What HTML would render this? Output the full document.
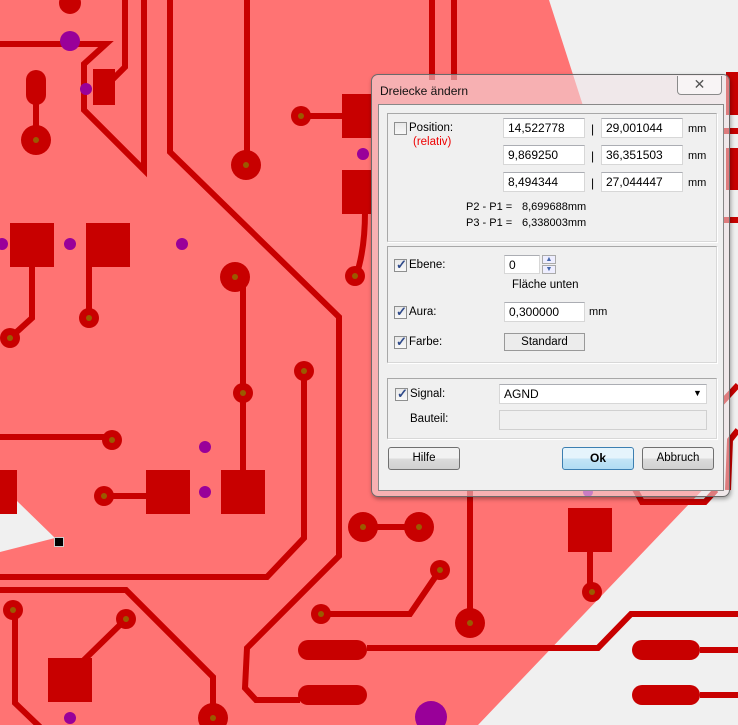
<!DOCTYPE html>
<html><head><meta charset="utf-8"><style>
*{box-sizing:border-box;margin:0;padding:0}
body{width:738px;height:725px;overflow:hidden;background:#f0f0f0;position:relative;font-family:"Liberation Sans",sans-serif;font-size:11px;color:#000}
svg{position:absolute;left:0;top:0}
.dlg{position:absolute;left:371px;top:74px;width:359px;height:423px;border:1px solid #6a6a6a;border-radius:7px;background:rgba(240,225,230,0.55);box-shadow:1px 2px 4px rgba(0,0,0,.35)}
.ttl{position:absolute;left:8px;top:9px;font-size:12px;color:#111}
.cls{position:absolute;left:305px;top:1px;width:45px;height:19px;border:1px solid #8a8a8a;border-top:none;border-radius:0 0 4px 4px;background:rgba(255,255,255,.5);text-align:center;font-size:14px;color:#555;line-height:17px}
.cl{position:absolute;left:6px;top:29px;width:346px;height:387px;background:#f0f0f0;border:1px solid #888}
.a{position:absolute}
.grp{position:absolute;border:1px solid #d8d8d8;border-top-color:#a8a8a8;border-left-color:#a8a8a8;box-shadow:1px 1px 0 #fff}
.cb{position:absolute;width:13px;height:13px;border:1px solid #8e8f8f;background:linear-gradient(#e8e8e8,#f8f8f8)}
.cb.k:after{content:"✓";position:absolute;left:1px;top:-3px;font-size:13px;color:#2f4a8a;font-weight:bold}
.inp{position:absolute;height:20px;background:#fff;border:1px solid #d7d7d7;border-top-color:#abadb3;padding:2px 4px;font-size:12px}
.btn{position:absolute;height:23px;border:1px solid #707070;border-radius:3px;background:linear-gradient(#f2f2f2 50%,#dcdcdc 50%,#d0d0d0);text-align:center;line-height:21px;font-size:11.5px}
</style></head><body>
<svg width="738" height="725" viewBox="0 0 738 725">
<polygon points="0,0 549,0 705,485 712,480 478,725 0,725" fill="#ff7373"/>
<polygon points="0,510 17,501 55,538 0,552" fill="#f0f0f0"/>
<g stroke="#c80000" stroke-width="6" fill="none" stroke-linejoin="miter">
<polyline points="0,44 106,44 84,64 84,110 144,170 144,0"/>
<polyline points="125,0 125,67 113,79"/>
<line x1="36" y1="104" x2="36" y2="140"/>
<polyline points="170,0 170,152 339,317 339,556 247,648 245,688 256,700 300,700"/>
<line x1="247" y1="0" x2="247" y2="165"/>
<line x1="301" y1="116" x2="345" y2="116"/>
<path d="M365,212 Q365,250 356,276"/>
<polyline points="32,267 32,318 10,338"/>
<line x1="89" y1="267" x2="89" y2="318"/>
<line x1="243" y1="277" x2="243" y2="492"/>
<polyline points="304,371 304,538 267,577 0,577"/>
<line x1="0" y1="437" x2="112" y2="437"/>
<line x1="104" y1="496" x2="150" y2="496"/>
<polyline points="0,590 126,590 213,677 213,718"/>
<polyline points="15,610 15,703 40,727"/>
<line x1="126" y1="619" x2="84" y2="660"/>
<line x1="363" y1="527" x2="419" y2="527"/>
<line x1="470" y1="480" x2="470" y2="623"/>
<polyline points="321,614 410,614 440,570"/>
<line x1="590" y1="540" x2="590" y2="592"/>
<polyline points="367,648 598,648 631,614 738,614"/>
<line x1="700" y1="650" x2="738" y2="650"/>
<line x1="700" y1="695" x2="738" y2="695"/>
<line x1="432" y1="0" x2="432" y2="80"/>
<line x1="454" y1="0" x2="454" y2="80"/>
<polyline points="630,480 642,502 705,502 716,490"/>
<line x1="720" y1="131" x2="738" y2="131"/>
<line x1="720" y1="220" x2="738" y2="220"/>
<polyline points="715,410 738,385"/>
<polyline points="728,490 730,440 738,430"/>
</g>
<g fill="#c80000">
<circle cx="70" cy="3" r="11"/>
<rect x="93" y="69" width="22" height="36"/>
<rect x="26" y="70" width="20" height="35" rx="10"/>
<rect x="342" y="94" width="30" height="44"/>
<rect x="342" y="170" width="30" height="44"/>
<rect x="10" y="223" width="44" height="44"/>
<rect x="86" y="223" width="44" height="44"/>
<rect x="146" y="470" width="44" height="44"/>
<rect x="221" y="470" width="44" height="44"/>
<rect x="0" y="470" width="17" height="44"/>
<rect x="48" y="658" width="44" height="44"/>
<rect x="568" y="508" width="44" height="44"/>
<rect x="298" y="640" width="69" height="20" rx="10"/>
<rect x="298" y="685" width="69" height="20" rx="10"/>
<rect x="632" y="640" width="68" height="20" rx="10"/>
<rect x="632" y="685" width="68" height="20" rx="10"/>
<rect x="726" y="72" width="12" height="43"/>
<rect x="726" y="148" width="12" height="42"/>
</g>
<g fill="#c80000">
<circle cx="36" cy="140" r="15"/><circle cx="246" cy="165" r="15"/><circle cx="235" cy="277" r="15"/><circle cx="363" cy="527" r="15"/><circle cx="419" cy="527" r="15"/><circle cx="470" cy="623" r="15"/><circle cx="213" cy="718" r="15"/>
<circle cx="301" cy="116" r="10"/><circle cx="355" cy="276" r="10"/><circle cx="10" cy="338" r="10"/><circle cx="89" cy="318" r="10"/><circle cx="243" cy="393" r="10"/><circle cx="304" cy="371" r="10"/><circle cx="112" cy="440" r="10"/><circle cx="104" cy="496" r="10"/><circle cx="13" cy="610" r="10"/><circle cx="126" cy="619" r="10"/><circle cx="321" cy="614" r="10"/><circle cx="440" cy="570" r="10"/><circle cx="592" cy="592" r="10"/>
</g>
<g fill="#9a5a00">
<circle cx="36" cy="140" r="3"/><circle cx="246" cy="165" r="3"/><circle cx="235" cy="277" r="3"/><circle cx="363" cy="527" r="3"/><circle cx="419" cy="527" r="3"/><circle cx="470" cy="623" r="3"/><circle cx="213" cy="718" r="3"/>
<circle cx="301" cy="116" r="3"/><circle cx="355" cy="276" r="3"/><circle cx="10" cy="338" r="3"/><circle cx="89" cy="318" r="3"/><circle cx="243" cy="393" r="3"/><circle cx="304" cy="371" r="3"/><circle cx="112" cy="440" r="3"/><circle cx="104" cy="496" r="3"/><circle cx="13" cy="610" r="3"/><circle cx="126" cy="619" r="3"/><circle cx="321" cy="614" r="3"/><circle cx="440" cy="570" r="3"/><circle cx="592" cy="592" r="3"/>
</g>
<g fill="#990099">
<circle cx="70" cy="41" r="10"/><circle cx="86" cy="89" r="6"/><circle cx="363" cy="154" r="6"/><circle cx="2" cy="244" r="6"/><circle cx="70" cy="244" r="6"/><circle cx="182" cy="244" r="6"/><circle cx="205" cy="447" r="6"/><circle cx="205" cy="492" r="6"/><circle cx="70" cy="718" r="6"/><circle cx="431" cy="717" r="16"/><circle cx="588" cy="492" r="5"/>
</g>
<rect x="54.5" y="537.5" width="9" height="9" fill="#000" stroke="#ccc"/>
</svg>
<div class="dlg">
<div class="ttl">Dreiecke ändern</div>
<div class="cls">✕</div>
<div class="cl">
<div class="grp" style="left:8px;top:8px;width:330px;height:129px"></div>
<div class="grp" style="left:8px;top:141px;width:330px;height:117px"></div>
<div class="grp" style="left:8px;top:273px;width:330px;height:61px"></div>
</div>
</div>
<div class="cb" style="left:394px;top:122px"></div>
<div class="a" style="left:409px;top:122px;font-size:11.5px">Position:</div>
<div class="a" style="left:413px;top:136px;font-size:11.5px;color:#e00">(relativ)</div>
<div class="inp" style="left:503px;top:118px;width:82px">14,522778</div>
<div class="inp" style="left:601px;top:118px;width:82px">29,001044</div>
<div class="inp" style="left:503px;top:145px;width:82px">9,869250</div>
<div class="inp" style="left:601px;top:145px;width:82px">36,351503</div>
<div class="inp" style="left:503px;top:172px;width:82px">8,494344</div>
<div class="inp" style="left:601px;top:172px;width:82px">27,044447</div>
<div class="a" style="left:591px;top:122px;font-size:12px">|</div>
<div class="a" style="left:591px;top:149px;font-size:12px">|</div>
<div class="a" style="left:591px;top:176px;font-size:12px">|</div>
<div class="a" style="left:688px;top:123px">mm</div>
<div class="a" style="left:688px;top:150px">mm</div>
<div class="a" style="left:688px;top:177px">mm</div>
<div class="a" style="left:466px;top:201px">P2 - P1 =</div>
<div class="a" style="left:522px;top:201px">8,699688mm</div>
<div class="a" style="left:466px;top:217px">P3 - P1 =</div>
<div class="a" style="left:522px;top:217px">6,338003mm</div>
<div class="cb k" style="left:394px;top:259px"></div>
<div class="a" style="left:409px;top:259px;font-size:11.5px">Ebene:</div>
<div class="inp" style="left:504px;top:255px;width:36px;height:19px">0</div>
<div class="a" style="left:542px;top:255px;width:14px;height:9px;border:1px solid #aaa;background:#eef;font-size:7px;text-align:center;line-height:8px;color:#46a">▲</div>
<div class="a" style="left:542px;top:265px;width:14px;height:9px;border:1px solid #aaa;background:#eef;font-size:7px;text-align:center;line-height:8px;color:#46a">▼</div>
<div class="a" style="left:512px;top:279px;font-size:11.5px">Fläche unten</div>
<div class="cb k" style="left:394px;top:306px"></div>
<div class="a" style="left:409px;top:306px;font-size:11.5px">Aura:</div>
<div class="inp" style="left:504px;top:302px;width:81px">0,300000</div>
<div class="a" style="left:589px;top:306px">mm</div>
<div class="cb k" style="left:394px;top:336px"></div>
<div class="a" style="left:409px;top:336px;font-size:11.5px">Farbe:</div>
<div class="a" style="left:504px;top:333px;width:81px;height:18px;border:1px solid #999;background:#ececec;text-align:center;line-height:16px;font-size:11.5px">Standard</div>
<div class="cb k" style="left:395px;top:388px"></div>
<div class="a" style="left:410px;top:388px;font-size:11.5px">Signal:</div>
<div class="inp" style="left:499px;top:384px;width:208px">AGND</div>
<div class="a" style="left:693px;top:388px;font-size:9px">▼</div>
<div class="a" style="left:410px;top:413px;font-size:11.5px">Bauteil:</div>
<div class="a" style="left:499px;top:410px;width:208px;height:20px;border:1px solid #d0d0d0;background:#f0f0f0"></div>
<div class="btn" style="left:388px;top:447px;width:72px">Hilfe</div>
<div class="btn" style="left:562px;top:447px;width:72px;border-color:#3c7fb1;background:linear-gradient(#e5f4fc 50%,#c4e5f6 50%,#b0dcf3);font-weight:bold;font-size:12px">Ok</div>
<div class="btn" style="left:642px;top:447px;width:72px">Abbruch</div>
</body></html>
